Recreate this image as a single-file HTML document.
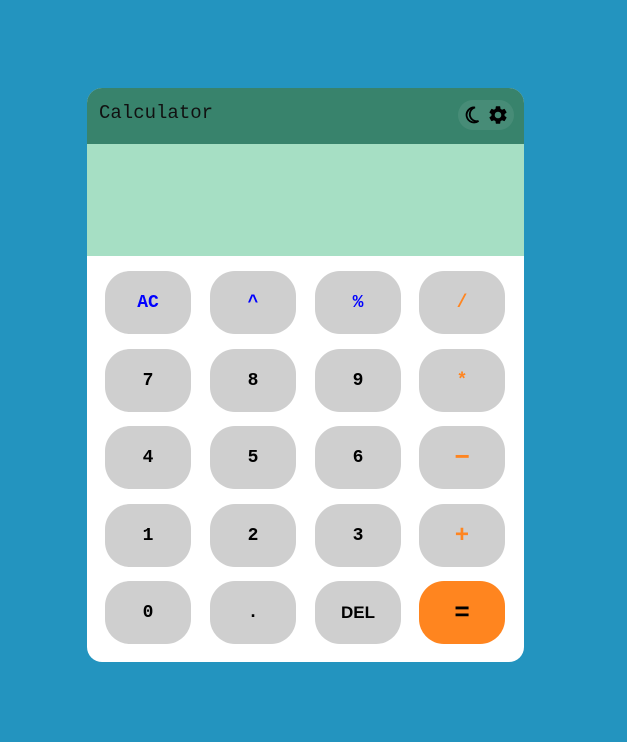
<!DOCTYPE html>
<html><head><style>
html,body{margin:0;padding:0;}
body{width:627px;height:742px;background:#2394bf;position:relative;overflow:hidden;font-family:"Liberation Mono",monospace;}
.card{position:absolute;left:87px;top:88px;width:437px;height:574px;background:#fff;border-radius:15px;overflow:hidden;}
.hdr{position:absolute;left:0;top:0;width:437px;height:56px;background:#38836c;}
.title{position:absolute;left:12px;top:14px;font-size:19px;color:#111;font-family:"Liberation Mono",monospace;}
.pill{position:absolute;left:371px;top:12px;width:56px;height:30px;border-radius:15px;background:rgba(255,255,255,0.08);}
.disp{position:absolute;left:0;top:56px;width:437px;height:112px;background:#a6dfc4;}
.b{position:absolute;width:86px;height:63px;border-radius:25px;background:#cfcfcf;display:flex;align-items:center;justify-content:center;font-weight:bold;font-size:18px;color:#000;padding-top:1px;box-sizing:border-box;}
.blue{color:#0000ff;}.or{color:#ff8520;}
.eq{background:#ff851f;font-size:26px;}
.del{font-family:"Liberation Sans",sans-serif;font-size:17px;}
</style></head><body>
<div class="card">
<div class="hdr"><div class="title">Calculator</div>
<div class="pill">
<svg style="position:absolute;left:6px;top:6px" width="16" height="18" viewBox="0 0 16 18"><path d="M11 1.5A7.5 7.5 0 1 0 14.5 15 A6.3 6.3 0 0 1 11 1.5Z" fill="none" stroke="#000" stroke-width="1.8"/></svg>
<svg style="position:absolute;left:29px;top:4px" width="22" height="22" viewBox="0 0 24 24"><path fill="#000" d="M19.14 12.94c.04-.3.06-.61.06-.94s-.02-.64-.07-.94l2.03-1.58a.49.49 0 0 0 .12-.61l-1.920-3.32a.49.49 0 0 0-.59-.22l-2.39.96c-.5-.38-1.030-.7-1.62-.94l-.36-2.54a.48.48 0 0 0-.48-.41h-3.84c-.24 0-.43.17-.47.41l-.36 2.54c-.59.24-1.13.57-1.62.94l-2.39-.96a.48.48 0 0 0-.59.22L2.74 8.87c-.12.21-.08.47.12.61l2.03 1.58c-.05.3-.09.63-.09.94s.02.64.07.94l-2.03 1.58a.49.49 0 0 0-.12.61l1.92 3.32c.12.22.37.29.59.22l2.39-.96c.5.38 1.03.7 1.62.94l.36 2.54c.05.24.24.41.48.41h3.84c.24 0 .44-.17.47-.41l.36-2.54c.59-.24 1.13-.56 1.62-.94l2.39.96c.22.08.47 0 .59-.22l1.92-3.32c.12-.22.07-.47-.12-.61l-2.01-1.58zM12 15.6A3.6 3.6 0 1 1 12 8.4a3.6 3.6 0 0 1 0 7.2z"/></svg>
</div></div>
<div class="disp"></div>
<div class="b blue" style="left:18px;top:183px">AC</div>
<div class="b blue" style="left:123px;top:183px">^</div>
<div class="b blue" style="left:228px;top:183px">%</div>
<div class="b or" style="left:332px;top:183px">/</div>
<div class="b" style="left:18px;top:261px">7</div>
<div class="b" style="left:123px;top:261px">8</div>
<div class="b" style="left:228px;top:261px">9</div>
<div class="b or" style="left:332px;top:261px">*</div>
<div class="b" style="left:18px;top:338px">4</div>
<div class="b" style="left:123px;top:338px">5</div>
<div class="b" style="left:228px;top:338px">6</div>
<div class="b or" style="left:332px;top:338px;font-size:26px">−</div>
<div class="b" style="left:18px;top:416px">1</div>
<div class="b" style="left:123px;top:416px">2</div>
<div class="b" style="left:228px;top:416px">3</div>
<div class="b or" style="left:332px;top:416px;font-size:24px">+</div>
<div class="b" style="left:18px;top:493px">0</div>
<div class="b" style="left:123px;top:493px">.</div>
<div class="b del" style="left:228px;top:493px">DEL</div>
<div class="b eq" style="left:332px;top:493px">=</div>
</div>
</body></html>
